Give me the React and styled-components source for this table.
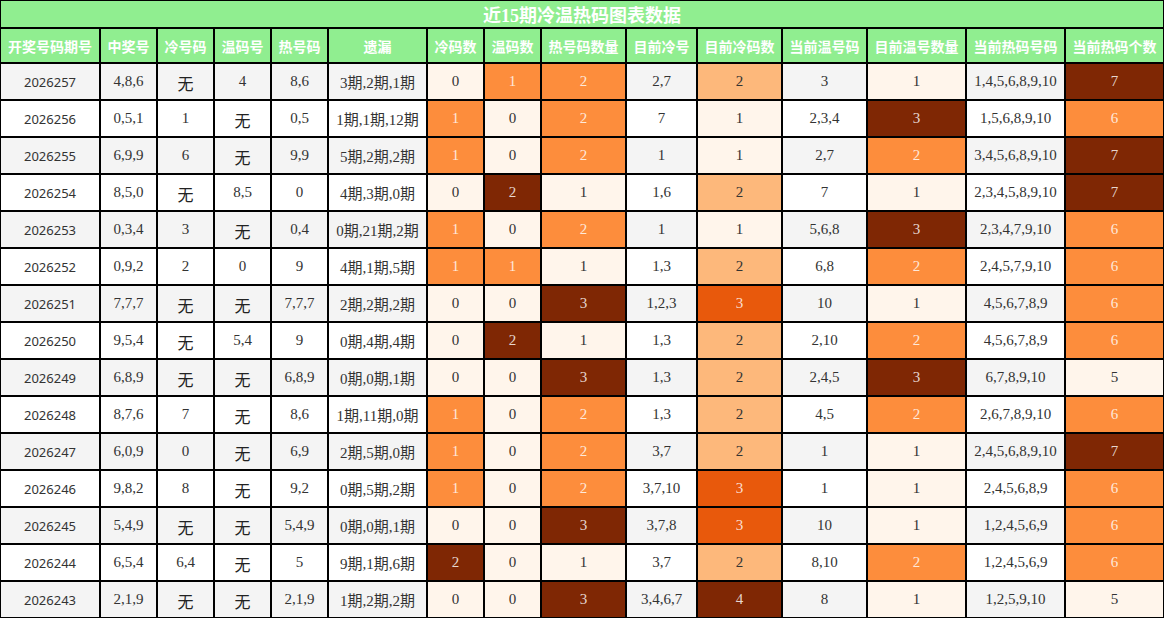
import React from 'react';
import styled, { createGlobalStyle } from 'styled-components';

const GlobalStyle = createGlobalStyle`
  body {
    margin: 0;
    background: #fff;
  }
`;

const Table = styled.table`
  width: 1164px;
  table-layout: fixed;
  border-collapse: separate;
  border-spacing: 0;
`;

const TitleCell = styled.th`
  height: 26px;
  padding: 0;
  border: 1px solid #000;
  background: #90ee90;
  color: #fff;
  font: bold 18px 'Liberation Serif', 'Noto Sans CJK SC', serif;
  text-align: center;
  vertical-align: middle;
`;

const HeadCell = styled.th`
  height: 33px;
  padding: 0;
  border: 1px solid #000;
  background: #90ee90;
  color: #fff;
  font: bold 14px 'Noto Sans CJK SC', sans-serif;
  text-align: center;
  vertical-align: middle;
  white-space: nowrap;
`;

const Row = styled.tr`
  background: ${(p) => (p.$odd ? '#f4f4f4' : '#fff')};
`;

const Cell = styled.td`
  height: 35px;
  padding: 0;
  border: 1px solid #000;
  background: ${(p) => p.$bg || 'transparent'};
  color: ${(p) => (p.$light ? 'rgba(255, 255, 255, 0.82)' : '#333')};
  font-family: ${(p) =>
    p.$sans ? "'Noto Sans', sans-serif" : "'Liberation Serif', 'Noto Sans CJK SC', serif"};
  font-size: ${(p) => (p.$sans ? '13px' : '15px')};
  text-align: center;
  vertical-align: middle;
  white-space: nowrap;
`;

const None = styled.span`
  font: 16px 'Noto Sans CJK SC', sans-serif;
  color: #222;
  position: relative;
  top: 1px;
`;

const widths = [100, 57, 57, 57, 57, 99, 57, 57, 85, 71, 85, 85, 99, 99, 99];

const headers = [
  '开奖号码期号', '中奖号', '冷号码', '温码号', '热号码', '遗漏', '冷码数', '温码数',
  '热号码数量', '目前冷号', '目前冷码数', '当前温号码', '目前温号数量', '当前热码号码', '当前热码个数',
];

const rows = [
  ['2026257', '4,8,6', '无', '4', '8,6', '3期,2期,1期', 0, 1, 2, '2,7', 2, '3', 1, '1,4,5,6,8,9,10', 7],
  ['2026256', '0,5,1', '1', '无', '0,5', '1期,1期,12期', 1, 0, 2, '7', 1, '2,3,4', 3, '1,5,6,8,9,10', 6],
  ['2026255', '6,9,9', '6', '无', '9,9', '5期,2期,2期', 1, 0, 2, '1', 1, '2,7', 2, '3,4,5,6,8,9,10', 7],
  ['2026254', '8,5,0', '无', '8,5', '0', '4期,3期,0期', 0, 2, 1, '1,6', 2, '7', 1, '2,3,4,5,8,9,10', 7],
  ['2026253', '0,3,4', '3', '无', '0,4', '0期,21期,2期', 1, 0, 2, '1', 1, '5,6,8', 3, '2,3,4,7,9,10', 6],
  ['2026252', '0,9,2', '2', '0', '9', '4期,1期,5期', 1, 1, 1, '1,3', 2, '6,8', 2, '2,4,5,7,9,10', 6],
  ['2026251', '7,7,7', '无', '无', '7,7,7', '2期,2期,2期', 0, 0, 3, '1,2,3', 3, '10', 1, '4,5,6,7,8,9', 6],
  ['2026250', '9,5,4', '无', '5,4', '9', '0期,4期,4期', 0, 2, 1, '1,3', 2, '2,10', 2, '4,5,6,7,8,9', 6],
  ['2026249', '6,8,9', '无', '无', '6,8,9', '0期,0期,1期', 0, 0, 3, '1,3', 2, '2,4,5', 3, '6,7,8,9,10', 5],
  ['2026248', '8,7,6', '7', '无', '8,6', '1期,11期,0期', 1, 0, 2, '1,3', 2, '4,5', 2, '2,6,7,8,9,10', 6],
  ['2026247', '6,0,9', '0', '无', '6,9', '2期,5期,0期', 1, 0, 2, '3,7', 2, '1', 1, '2,4,5,6,8,9,10', 7],
  ['2026246', '9,8,2', '8', '无', '9,2', '0期,5期,2期', 1, 0, 2, '3,7,10', 3, '1', 1, '2,4,5,6,8,9', 6],
  ['2026245', '5,4,9', '无', '无', '5,4,9', '0期,0期,1期', 0, 0, 3, '3,7,8', 3, '10', 1, '1,2,4,5,6,9', 6],
  ['2026244', '6,5,4', '6,4', '无', '5', '9期,1期,6期', 2, 0, 1, '3,7', 2, '8,10', 2, '1,2,4,5,6,9', 6],
  ['2026243', '2,1,9', '无', '无', '2,1,9', '1期,2期,2期', 0, 0, 3, '3,4,6,7', 4, '8', 1, '1,2,5,9,10', 5],
];

const heatCols = [6, 7, 8, 10, 12, 14];

// colour stops of the orange ramp, picked by position in the column's range
const heatColor = (t) => {
  if (t <= 0.01) return { bg: '#fff5eb', light: false };
  if (t < 0.45) return { bg: '#fdb87b', light: false };
  if (t < 0.6) return { bg: '#fd8d3c', light: true };
  if (t < 0.99) return { bg: '#e8590c', light: true };
  return { bg: '#7f2704', light: true };
};

const ranges = {};
heatCols.forEach((c) => {
  const vals = rows.map((r) => r[c]);
  ranges[c] = [Math.min(...vals), Math.max(...vals)];
});

export default function App() {
  return (
    <>
      <GlobalStyle />
      <Table>
        <colgroup>
          {widths.map((w, i) => (
            <col key={i} style={{ width: w }} />
          ))}
        </colgroup>
        <thead>
          <tr>
            <TitleCell colSpan={15}>近15期冷温热码图表数据</TitleCell>
          </tr>
          <tr>
            {headers.map((h) => (
              <HeadCell key={h}>{h}</HeadCell>
            ))}
          </tr>
        </thead>
        <tbody>
          {rows.map((r, ri) => (
            <Row key={r[0]} $odd={ri % 2 === 0}>
              {r.map((v, ci) => {
                if (heatCols.includes(ci)) {
                  const [lo, hi] = ranges[ci];
                  const { bg, light } = heatColor((v - lo) / (hi - lo));
                  return (
                    <Cell key={ci} $bg={bg} $light={light}>
                      {v}
                    </Cell>
                  );
                }
                return (
                  <Cell key={ci} $sans={ci === 0}>
                    {v === '无' ? <None>无</None> : v}
                  </Cell>
                );
              })}
            </Row>
          ))}
        </tbody>
      </Table>
    </>
  );
}
